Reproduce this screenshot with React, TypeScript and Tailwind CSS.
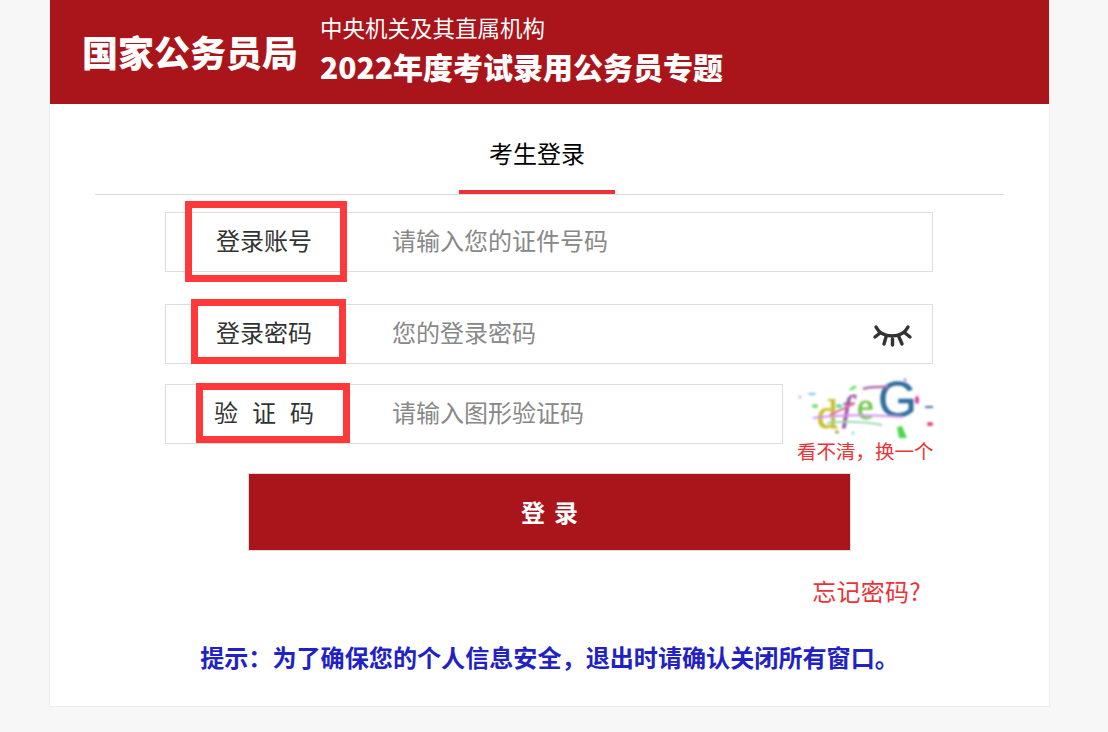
const cjk = "font-['Noto_Sans_CJK_SC','Noto_Sans',sans-serif]"

function EyeClosed() {
  return (
    <svg width="42" height="26" viewBox="0 0 42 26" fill="none" stroke="#333" strokeWidth="3.4" strokeLinecap="round">
      <path d="M5 3C11 15 31 15 37 3" />
      <path d="M9 9L4 13" />
      <path d="M15 13L13 20" />
      <path d="M21.5 15V21" />
      <path d="M28 13L31 20" />
      <path d="M34 9L39 13" />
    </svg>
  )
}

function Captcha() {
  return (
    <svg width="136" height="60" viewBox="0 0 136 60" className="block overflow-visible">
      <defs>
        <filter id="soft"><feGaussianBlur stdDeviation="0.8" /></filter>
      </defs>
      <g filter="url(#soft)">
        <text x="20" y="50" fontSize="41" fontFamily="Liberation Serif" fill="#c8c030" stroke="#c8c030" strokeWidth="1">d</text>
        <text x="45" y="42" fontSize="36" fontFamily="Liberation Serif" fontStyle="italic" fill="#a060a8" stroke="#a060a8" strokeWidth="1">f</text>
        <text x="60" y="41" fontSize="37" fontFamily="Liberation Serif" fill="#78c850" stroke="#78c850" strokeWidth="0.8">e</text>
        <text x="81" y="39" fontSize="50" fontFamily="Liberation Sans" fill="#2f6f9f" stroke="#2f6f9f" strokeWidth="0.5">G</text>
        <path d="M16 40C45 36 80 37 106 39" stroke="#d090f0" strokeWidth="2" fill="none" />
        <path d="M30 45C50 43 70 44 85 47" stroke="#90d8b0" strokeWidth="2" fill="none" />
        <path d="M33 37L58 25" stroke="#e07090" strokeWidth="2" />
        <path d="M66 11C75 8 83 10 91 8" stroke="#b070b0" strokeWidth="2.5" fill="none" />
        <path d="M128 29H136" stroke="#5070a0" strokeWidth="2" />
        <ellipse cx="120" cy="22" rx="2" ry="4" fill="#e040a0" />
        <ellipse cx="133" cy="46" rx="3" ry="2" fill="#e04070" />
        <path d="M100 49L105 48L110 60H102Z" fill="#50d850" />
        <ellipse cx="56" cy="10" rx="4" ry="1.5" fill="#70e070" transform="rotate(-30 56 10)" />
        <ellipse cx="18" cy="28" rx="3" ry="2" fill="#70e070" />
        <ellipse cx="42" cy="28" rx="3" ry="2" fill="#50e0a0" />
        <ellipse cx="15" cy="16" rx="4" ry="1.2" fill="#80c8f0" />
        <ellipse cx="3" cy="19" rx="1.5" ry="1.5" fill="#c0b0f0" />
        <ellipse cx="108" cy="2" rx="1.5" ry="2" fill="#c090f0" />
        <ellipse cx="40" cy="54" rx="2" ry="1.5" fill="#a0a040" />
        <ellipse cx="56" cy="55" rx="1.5" ry="1.5" fill="#90d0f0" />
      </g>
    </svg>
  )
}

export default function App() {
  return (
    <div className={`h-[732px] overflow-hidden bg-[#f7f7f7] ${cjk}`}>
      <div className="mx-[49px] h-[707px] w-[1001px] border-x border-b border-[#eeeeee] bg-white">
        {/* Header */}
        <div className="flex h-[104px] items-center bg-[#a9151b] pl-[32px] text-white">
          <div className="w-[238px] text-[36px] leading-none font-extrabold pb-[3px]">国家公务员局</div>
          <div className="pb-[8px]">
            <div className="text-[22.5px] leading-[30px]">中央机关及其直属机构</div>
            <div className="mt-[5px] text-[30px] leading-[38px] font-extrabold">2022年度考试录用公务员专题</div>
          </div>
        </div>

        {/* Tab */}
        <div className="mx-[45px] flex h-[91px] border-b border-[#dddddd] pl-[364px]">
          <div className="relative flex h-[90px] w-[156px] items-center justify-center pt-[8px] text-[24px] leading-none text-black">
            考生登录
            <div className="absolute right-0 bottom-0 left-0 h-[4px] bg-[#ed3237]" />
          </div>
        </div>

        {/* Form */}
        <div className="mt-[17px] ml-[115px] w-[768px] text-[24px] text-[#333333]">
          <div className="relative flex h-[60px] items-center border border-[#dddddd]">
            <div className="w-[226px] pb-[4px] pl-[50px]">登录账号</div>
            <input className="flex-1 pb-[4px] outline-none placeholder:text-[#888888]" placeholder="请输入您的证件号码" />
            <div className="absolute top-[-12px] left-[19px] h-[81px] w-[162px] border-[7px] border-[#ff3939]" />
          </div>

          <div className="relative mt-[32px] flex h-[60px] items-center border border-[#dddddd]">
            <div className="w-[226px] pb-[4px] pl-[50px]">登录密码</div>
            <input className="flex-1 pb-[4px] outline-none placeholder:text-[#888888]" placeholder="您的登录密码" />
            <div className="mt-[6px] mr-[19px]"><EyeClosed /></div>
            <div className="absolute top-[-6px] left-[25px] h-[65px] w-[155px] border-[7px] border-[#ff3939]" />
          </div>

          <div className="relative mt-[20px] flex w-full">
            <div className="relative flex h-[60px] w-[618px] items-center border border-[#dddddd]">
              <div className="w-[226px] pb-[4px] pl-[48px] tracking-[14px]">验证码</div>
              <input className="min-w-0 flex-1 pb-[4px] outline-none placeholder:text-[#888888]" placeholder="请输入图形验证码" />
              <div className="absolute top-[-2px] left-[30px] h-[60px] w-[154px] border-[7px] border-[#ff3939]" />
            </div>
            <div className="ml-[14px] mt-[-6px] w-[136px]">
              <Captcha />
              <div className="mt-[-1px] text-[19.5px] leading-[28px] whitespace-nowrap text-[#ed3237]">{'看不清\uFF0C换一个'}</div>
            </div>
          </div>
        </div>

        {/* Submit */}
        <div className="mt-[8px] flex justify-center">
          <button className="h-[78px] w-[603px] border border-[#dddddd] bg-[#a9151b] pl-[9px] text-[24px] font-bold tracking-[9px] text-white">登录</button>
        </div>

        <div className="mt-[25px] pr-[128px] text-right text-[24px] leading-[30px] tracking-[0.25px] text-[#ed3237]">忘记密码?</div>

        <div className="mt-[34px] text-center text-[24.1px] leading-[34px] font-bold text-[#2222c4]">
          {'提示\uFF1A为了确保您的个人信息安全\uFF0C退出时请确认关闭所有窗口\u3002'}
        </div>
      </div>
    </div>
  )
}
